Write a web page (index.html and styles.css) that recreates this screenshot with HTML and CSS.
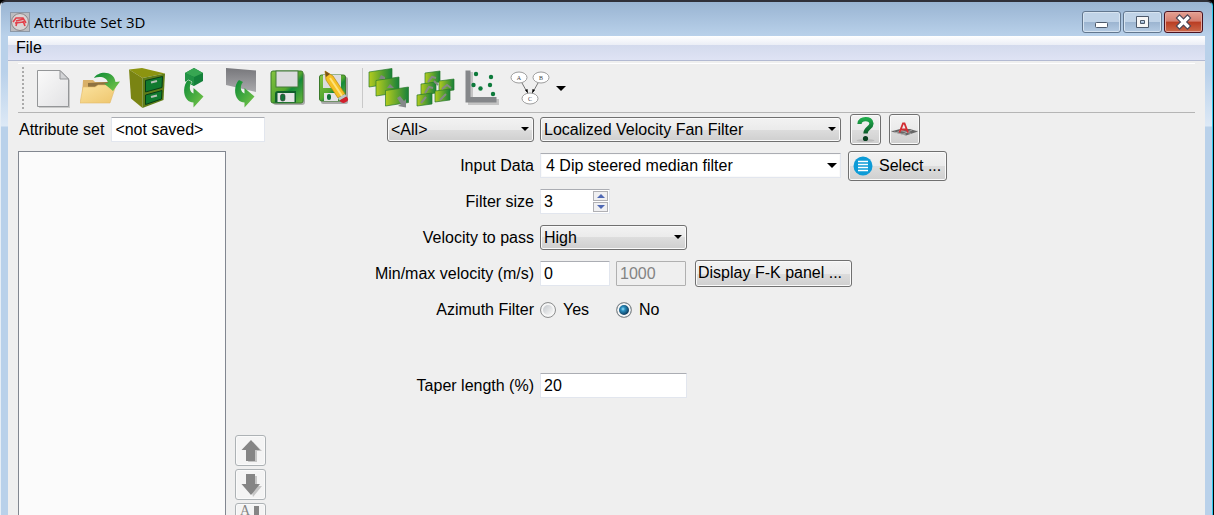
FILE: index.html
```html
<!DOCTYPE html>
<html lang="en">
<head>
<meta charset="utf-8">
<title>Attribute Set 3D</title>
<link rel="stylesheet" href="styles.css">
</head>
<body>
<svg class="defs" width="0" height="0" aria-hidden="true">
  <defs>
    <linearGradient id="green" x1="0" y1="0" x2="1" y2="1"><stop offset="0" stop-color="#0b8a35"/><stop offset="1" stop-color="#7cc84a"/></linearGradient>
    <linearGradient id="tile" x1="0" y1="0" x2="1" y2="0"><stop offset="0" stop-color="#b4cc1e"/><stop offset="1" stop-color="#17803a"/></linearGradient>
    <linearGradient id="paper" x1="0" y1="0" x2="1" y2="1"><stop offset="0" stop-color="#fafafa"/><stop offset="1" stop-color="#e2e2e4"/></linearGradient>
    <linearGradient id="folder" x1="0" y1="0" x2="1" y2="1"><stop offset="0" stop-color="#fbe3a0"/><stop offset="1" stop-color="#eec56c"/></linearGradient>
    <linearGradient id="screen" x1="0" y1="0" x2="0" y2="1"><stop offset="0" stop-color="#77777b"/><stop offset="1" stop-color="#aaaaad"/></linearGradient>
    <linearGradient id="disk" x1="0" y1="0" x2="1" y2="1"><stop offset="0" stop-color="#86c440"/><stop offset=".5" stop-color="#55a72f"/><stop offset=".6" stop-color="#148a3a"/><stop offset="1" stop-color="#6cb83c"/></linearGradient>
    <linearGradient id="help" x1="0" y1="0" x2="0" y2="1"><stop offset="0" stop-color="#1faa4b"/><stop offset="1" stop-color="#0b5a2a"/></linearGradient>
    <g id="tile-shape"><path d="M0 2 15 0V11L0 13Z" fill="url(#tile)" stroke="#2a7a2c" stroke-width=".7"/></g>
    <path id="hook" d="M14 12C9 17 9 27 13 31.500 15 33.800 17 34.500 19.500 34.500V39.500L29.500 28.500 19.500 20V25.500C15.500 24 14.500 18 18 14Z"/>
  </defs>
</svg>

<main class="window">
  <header class="titlebar">
    <svg class="app-icon" viewBox="0 0 20 20" aria-hidden="true">
      <rect x=".5" y=".5" width="19" height="19" fill="#bcbcc0" stroke="#8d98a6"/>
      <circle cx="10" cy="10" r="8.500" fill="#d9d4d4" stroke="#8a8588"/>
      <path d="M3 10 6 6h7l3 5M6 9l8-2M5 11l9-1M7 10 6 14M13 9l2 5" fill="none" stroke="#e3404a" stroke-width="1.600"/>
    </svg>
    <h1 class="title">Attribute Set 3D</h1>
    <div class="window-buttons">
      <button class="win-btn" type="button" aria-label="Minimize"><svg viewBox="0 0 37 20"><rect x="12.500" y="10.500" width="12" height="5" rx="1" fill="#fff" stroke="#4c596b"/></svg></button>
      <button class="win-btn" type="button" aria-label="Maximize"><svg viewBox="0 0 37 20"><path d="M12.500 4.500h12v11h-12ZM16.500 8.500v3h4v-3Z" fill="#f6f6f6" fill-rule="evenodd" stroke="#4c596b"/></svg></button>
      <button class="win-btn win-close" type="button" aria-label="Close"><svg viewBox="0 0 37 20"><path d="M14.500 6 22.500 14M22.500 6 14.500 14" fill="none" stroke="#4c4656" stroke-width="5.500" stroke-linecap="square"/><path d="M14.500 6 22.500 14M22.500 6 14.500 14" fill="none" stroke="#fff" stroke-width="3.200" stroke-linecap="square"/></svg></button>
    </div>
  </header>

  <div class="client">
    <nav class="menubar"><button class="menu" type="button">File</button></nav>

    <div class="toolbar" role="toolbar">
      <span class="grip"></span>
      <button class="tool" type="button" aria-label="New"><svg viewBox="0 0 41 41"><path d="M6 4H29L37 12V40H6Z" fill="#c9c9c9"/><path d="M4.500 2.500H27L35.500 11V38.500H4.500Z" fill="url(#paper)" stroke="#949698"/><path d="M27 2.500V11H35.500Z" fill="#d2d3d5" stroke="#949698"/></svg></button>
      <button class="tool" type="button" aria-label="Open"><svg viewBox="0 0 41 41"><path d="M3 12H13L15 14H28V24L2 28Z" fill="#d9b068"/><path d="M8 15 28 14V22H8Z" fill="#8f7240"/><path d="M0 35 3 19H15L18 17H36L30 35Z" fill="url(#folder)" stroke="#e3b968" stroke-width=".6"/><path d="M14 10C18 3 34 2 35.500 14L40 13.500 33 23 24 15.500 28 15C27 9 20 8 14 10Z" fill="url(#green)"/></svg></button>
      <button class="tool" type="button" aria-label="Default set"><svg viewBox="0 0 41 41"><path d="M2 1.500 15 0 38 5.500 15.500 10Z" fill="#8c9410"/><path d="M2 1.500 15.500 10V40L4 30.500Z" fill="#7a8413"/><path d="M15.500 10 38 5.500 36.500 32 15.500 40Z" fill="#5f7d18"/><path d="M18.500 12.500 35.500 8.500 35 19.500 18.500 24ZM18.500 27 35 22.500 34.500 31 18.500 36.500Z" fill="#107a2f" stroke="#063d18"/><path d="M24 14.500 30 13M24 29 30 27.500" stroke="#b5c2b5" stroke-width="2.200"/></svg></button>
      <button class="tool" type="button" aria-label="Import set"><svg viewBox="0 0 41 41"><path d="M20 0 29 5V13L20 18 11 13V5Z" fill="#14803a"/><path d="M20 0 29 5 20 9 11 5Z" fill="#37a652"/><path d="M20 9V18L11 13V5Z" fill="#229245"/><use href="#hook" fill="#efefef" stroke="#efefef"/><use href="#hook" fill="url(#green)"/></svg></button>
      <button class="tool" type="button" aria-label="Reconstruct set"><svg viewBox="0 0 41 41"><path d="M5 0 35 2.500V24L5 17Z" fill="url(#screen)"/><use href="#hook" x="4" fill="url(#green)"/></svg></button>
      <button class="tool" type="button" aria-label="Save"><svg viewBox="0 0 41 41"><rect x="5" y="5" width="32" height="32" rx="3" fill="#aaa"/><rect x="3" y="3" width="32" height="32" rx="2" fill="url(#disk)" stroke="#3b7a2a"/><rect x="8" y="3" width="22" height="16" fill="#dcdcde" stroke="#447a3a"/><path d="M7 34.500V26Q7 23 10 23H28V34.500Z" fill="#105f2c"/><rect x="9.500" y="25" width="17" height="9" fill="#e4e4e6"/><rect x="12.500" y="26" width="4.500" height="7" rx="2" fill="#147238" stroke="#333" stroke-width=".6"/></svg></button>
      <button class="tool" type="button" aria-label="Save as"><svg viewBox="0 0 41 41"><rect x="6" y="9" width="27" height="27" rx="2" fill="#aaa"/><rect x="4.500" y="7" width="26" height="26" rx="2" fill="url(#disk)" stroke="#3b7a2a"/><rect x="8" y="7" width="18" height="13" fill="#dcdcde"/><rect x="9" y="25" width="14" height="8" fill="#e4e4e6"/><rect x="12" y="26" width="4" height="6" rx="2" fill="#147238"/><path d="M10 3 18 8 30 26 23 30 11 12Z" fill="#f5c024" stroke="#b98510" stroke-width=".7"/><path d="M10 3 15 6 11 9Z" fill="#7a5218"/><path d="M15 10 27 28" stroke="#ffe27a" stroke-width="2"/><path d="M23 30 30 26 31.500 28.500 24.500 32.500Z" fill="#bfc4c8"/><path d="M24.500 32.500 31.500 28.500Q35 32 31 34 27 36.500 24.500 32.500Z" fill="#d21f2c"/></svg></button>
      <span class="separator"></span>
      <button class="tool" type="button" aria-label="Redisplay"><svg viewBox="0 0 41 41"><g fill="url(#tile)" stroke="#2a7a2c" stroke-width=".7"><path d="M1 4 24 .5V15.500L1 19Z"/><path d="M8 12.500 31 9V24.500L8 28Z"/><path d="M17.500 22.500 40.500 19V34.500L17.500 38Z"/></g><path d="M11 11 13 7 17 9 17 11ZM19 20 22 16 26 20Z" fill="#7f8583"/><path d="M29 30 32 28 36 33 38 31V39.500L30 38 33 36Z" fill="#85898a"/></svg></button>
      <button class="tool" type="button" aria-label="Evaluate"><svg viewBox="0 0 41 41"><use href="#tile-shape" x="10" y="3"/><use href="#tile-shape" x="6" y="14"/><use href="#tile-shape" x="24" y="11"/><use href="#tile-shape" x="2" y="25"/><use href="#tile-shape" x="20" y="21"/><path d="M13 14 17 9 21 10M10 25 14 19 18 20M27 21 32 17 36 20M6 35 11 29M25 32 31 26M19 13 23 17" fill="none" stroke="#858985" stroke-width="2"/></svg></button>
      <button class="tool" type="button" aria-label="Cross plot"><svg viewBox="0 0 41 41"><path d="M6 4H11V31H37V37H6Z" fill="#c4c4c4"/><path d="M3.500 2.500H8.500V29H34.500V34.500H3.500Z" fill="#85878a"/><g fill="#0d7a3b"><circle cx="14" cy="6" r="2.200"/><circle cx="29" cy="9" r="2.200"/><circle cx="11.500" cy="17" r="2.200"/><circle cx="18.500" cy="20.500" r="2.200"/><circle cx="28" cy="17" r="2.200"/><circle cx="31" cy="26" r="2.200"/></g></svg></button>
      <button class="tool" type="button" aria-label="Graph"><svg viewBox="0 0 41 41"><g fill="#fff" stroke="#929292" stroke-width=".9"><ellipse cx="10" cy="9.500" rx="8" ry="5.500"/><ellipse cx="32" cy="9.500" rx="8" ry="5.500"/><ellipse cx="21" cy="30.500" rx="8" ry="5.500"/></g><path d="M13 15 18 24M29 15 24 24" stroke="#555" stroke-width=".8"/><path d="M16 22 19 25.500 18.500 21ZM26 22 23 25.500 23.500 21Z"/><g class="node-text"><text x="10" y="11.500">A</text><text x="32" y="11.500">B</text><text x="21" y="32.500">C</text></g></svg></button>
      <button class="tool-more" type="button" aria-label="More"><span class="arrow arrow-large"></span></button>
    </div>

    <div class="content">
      <section class="set-pane">
        <div class="set-name"><label for="set">Attribute set</label><input class="field" id="set" type="text" value="&lt;not saved&gt;"></div>
        <div class="set-body">
          <div class="set-list" role="listbox" aria-label="Attributes"></div>
          <div class="set-actions">
            <button class="square faded" type="button" aria-label="Move up"><svg viewBox="0 0 29 29"><path d="M17 6 26 15H21V26H12Z" fill="#c6c6c6"/><path d="M15 4 24 14H19V25H10V14H5.500Z" fill="#858585"/></svg></button>
            <button class="square faded" type="button" aria-label="Move down"><svg viewBox="0 0 29 29"><path d="M12 6H21V16H26L17 27Z" fill="#c6c6c6"/><path d="M10 4H19V14H24L15 25 5.500 14H10Z" fill="#858585"/></svg></button>
            <button class="square faded" type="button" aria-label="Sort"><svg viewBox="0 0 29 29"><text class="sort-text" x="4" y="11">A</text><path d="M18 2H23V17H27L20.500 26 14 17H18Z" fill="#858585"/></svg></button>
          </div>
        </div>
      </section>

      <form class="params">
        <span class="select key-select"><select aria-label="Group"><option>&lt;All&gt;</option></select></span>
        <div class="controls">
          <span class="select wide"><select aria-label="Attribute"><option>Localized Velocity Fan Filter</option></select></span>
          <div class="helpers">
            <button class="square" type="button" aria-label="Help"><svg viewBox="0 0 29 29"><ellipse cx="14.500" cy="25.500" rx="9" ry="1.500" fill="#bbb"/><path d="M8.500 9C8.500 2.500 20.500 2.500 20.500 8.500 20.500 13 14.500 13 14.500 18.500" fill="none" stroke="url(#help)" stroke-width="4.300"/><circle cx="14.500" cy="23.500" r="2.600" fill="#093f20"/></svg></button>
            <button class="square" type="button" aria-label="Evaluate attribute"><svg viewBox="0 0 29 29"><path d="M1 16.500 10 14H20L28 16.500 16 20.500Z" fill="#666"/><path d="M4 17 16 20M9 15 21 18.500M5 18 16 14M11 20 22 15" stroke="#bbb" stroke-width=".7"/><path d="M9.500 17.500 13 8.500H14.500L18 17.500M11 14.500H16.500" fill="none" stroke="#d32d32" stroke-width="1.800"/></svg></button>
          </div>
        </div>

        <label for="input-data">Input Data</label>
        <div class="controls">
          <span class="select wide editable"><select id="input-data"><option>4 Dip steered median filter</option></select></span>
          <button class="button icon-button" type="button"><svg viewBox="0 0 20 20" aria-hidden="true"><circle cx="10" cy="10" r="9.500" fill="#0d9bd7"/><path d="M5 5.500H15M5 8.500H15M5 11.500H15M5 14.500H15" stroke="#fff" stroke-width="1.700"/></svg>Select ...</button>
        </div>

        <label for="size">Filter size</label>
        <div class="controls"><span class="spin"><input class="field short" id="size" type="number" value="3"><span class="steps"><button type="button" aria-label="Increase"><i class="up"></i></button><button type="button" aria-label="Decrease"><i class="down"></i></button></span></span></div>

        <label for="pass">Velocity to pass</label>
        <div class="controls"><span class="select medium"><select id="pass"><option>High</option></select></span></div>

        <label for="min">Min/max velocity (m/s)</label>
        <div class="controls"><span class="pair"><input class="field short" id="min" type="text" value="0"><input class="field short" type="text" value="1000" aria-label="Maximum velocity" disabled></span><button class="button fk-button" type="button">Display F-K panel ...</button></div>

        <span class="key">Azimuth Filter</span>
        <div class="controls pair"><label class="choice"><input type="radio" name="azimuth">Yes</label><label class="choice"><input type="radio" name="azimuth" checked>No</label></div>

        <label class="apart" for="taper">Taper length (%)</label>
        <div class="controls apart"><input class="field medium" id="taper" type="text" value="20"></div>
      </form>
    </div>
  </div>
</main>
</body>
</html>
```
FILE: styles.css
```css
* { box-sizing: border-box; }
body {
  margin: 0;
  background: #000;
  color: #000;
  font: 16px/20px "Liberation Sans", Arial, sans-serif;
}
button, input, select { font: inherit; color: inherit; margin: 0; }
button { padding: 0; border: 0; background: none; }
svg { display: block; }
.defs { position: absolute; }

.window {
  display: flex;
  flex-direction: column;
  height: 100vh;
  margin-right: 1px;
  padding: 0 7px;
  overflow: hidden;
  border: solid;
  border-width: 2px 1px 0;
  border-color: #2f3039 #2fc8ec #000 #e6eef6;
  border-radius: 6px 6px 0 0;
  background: linear-gradient(#99b4d2, #b9d1ea 34px, #b9d1ea 70px, #dde9f6 124px, #b9d1ea 125px);
}

.titlebar { display: flex; flex: none; height: 34px; padding: 6px 2px 0; align-items: center; }
.app-icon { width: 20px; height: 20px; }
.title { flex: 1; margin: 0 4px; font: 15px/20px "Open Sans", "Noto Sans", sans-serif; }
.window-buttons { display: flex; gap: 2px; align-self: flex-start; margin-top: 3px; }
.win-btn {
  width: 39px;
  height: 22px;
  border: 1px solid #62778f;
  border-radius: 3px;
  box-shadow: inset 0 0 0 1px #d7e4f1;
  background: linear-gradient(#c0d3e7 48%, #9bb4d0 50%, #b4cbe3);
}
.win-close { border-color: #4a1220; box-shadow: inset 0 0 0 1px #e5a79c; background: linear-gradient(#e5a092, #d57f70 46%, #b93c22 50%, #cc6a4a); }

.client { display: flex; flex: 1; flex-direction: column; min-height: 0; background: #efefef; }
.menubar { flex: none; height: 25px; padding: 0 8px; border-bottom: 1px solid #b3bad2; background: linear-gradient(#fff, #ebeef6 9px, #d3daed 9px, #dfe3f4); }
.menu { height: 24px; }

.toolbar {
  display: flex;
  flex: none;
  align-items: center;
  height: 50px;
  margin: 2px 10px 0;
  padding-left: 3px;
  border-top: 1px solid #fff;
  border-bottom: 1px solid #b5b5b5;
}
.grip { width: 2px; height: 42px; margin: 0 6px 0 1px; background: repeating-linear-gradient(#aaa 0 2px, #efefef 2px 4px); }
.tool { display: grid; flex: none; width: 47px; height: 48px; place-items: center; }
.tool svg { width: 41px; height: 41px; }
.separator { width: 1px; height: 40px; margin: 0 2px 0 3px; background: #c9c9c9; }
.node-text { font: 6px "Liberation Serif", serif; text-anchor: middle; fill: #444; }
.tool-more { display: grid; width: 16px; height: 40px; place-items: center; }
.arrow, .select::after { border: solid transparent; border-width: 4px 4px 0; border-top-color: #000; }
.arrow-large, .editable.select::after { border-width: 5px 5px 0; }

.content { display: flex; flex: 1; gap: 106px; min-height: 0; padding: 4px 10px 0; }
.set-pane { display: flex; flex: none; flex-direction: column; width: 248px; gap: 9px; }
.set-name { display: flex; align-items: center; gap: 7px; padding: 0 1px; }
.set-name label { flex: none; }
.set-name .field { flex: 1; min-width: 0; }
.set-body { display: flex; flex: 1; gap: 9px; min-height: 0; }
.set-list { flex: 1; border: 1px solid #828790; border-bottom: 0; background: #fbfbfb; }
.set-actions { display: flex; flex-direction: column; gap: 3px; padding-top: 284px; overflow: hidden; }

.field {
  height: 25px;
  padding: 0 3px;
  border: 1px solid #e2e6ee;
  border-top-color: #abadb3;
  border-radius: 1px;
  background: #fff;
}
.field:disabled { border: 1px solid #b0b0b0; background: #efefef; color: #838383; }
.short { width: 70px; }
.medium { width: 147px; }
.wide { width: 301px; }

.square {
  flex: none;
  width: 31px;
  height: 31px;
  border: 1px solid #707070;
  border-radius: 3px;
  box-shadow: inset 0 0 0 1px #fafafa;
  background: linear-gradient(#f2f2f2, #ebebeb 50%, #dddddd 50%, #cfcfcf);
}
.faded { border-color: #adb2b5; background: #f4f4f4; }
.sort-text { font: 14px "Liberation Serif", serif; fill: #858585; }

.params { display: grid; flex: 1; grid-template-columns: 162px 1fr; grid-auto-rows: 25px; align-content: start; gap: 11px 6px; align-items: center; }
.params > label, .key { text-align: right; white-space: nowrap; }
.key-select { width: 147px; justify-self: end; }
.controls { display: flex; align-items: center; gap: 7px; }
.helpers { display: flex; gap: 8px; padding-left: 2px; }
.pair { display: flex; gap: 6px; }
.apart { margin-top: 40px; }
.params > .apart { align-self: start; }
label.apart { line-height: 25px; }

.select { position: relative; display: block; }
.select select {
  display: block;
  width: 100%;
  height: 25px;
  padding: 0 16px 0 3px;
  appearance: none;
  border: 1px solid #707070;
  border-radius: 3px;
  box-shadow: inset 0 0 0 1px #fafafa;
  background: linear-gradient(#f2f2f2, #ebebeb 50%, #dddddd 50%, #cfcfcf);
}
.select::after { content: ""; position: absolute; top: 10px; right: 5px; pointer-events: none; }
.editable.select select { padding-left: 5px; border-color: #abadb3 #e2e6ee #e2e6ee; border-radius: 1px; background: #fff; }
.editable.select::after { right: 4px; }

.button {
  height: 27px;
  padding: 0 3px 2px 2px;
  border: 1px solid #707070;
  border-radius: 3px;
  box-shadow: inset 0 0 0 1px #fafafa;
  background: linear-gradient(#f2f2f2, #ebebeb 50%, #dddddd 50%, #cfcfcf);
  text-align: left;
  white-space: nowrap;
}
.icon-button { display: flex; min-width: 99px; height: 30px; align-items: center; gap: 6px; padding: 0 3px 0 4px; }
.icon-button svg { width: 20px; height: 20px; }
.fk-button { min-width: 157px; margin-left: 2px; }

.spin { position: relative; }
.spin .field { appearance: textfield; display: block; }
.steps { position: absolute; top: 2px; right: 2px; display: grid; width: 15px; gap: 1px; }
.steps button { display: grid; height: 10px; place-items: center; border: 1px solid #b0b0b4; background: #f0f0f2; }
.up, .down { border: solid transparent; }
.up { border-width: 0 4px 4px; border-bottom-color: #4f68b4; }
.down { border-width: 4px 4px 0; border-top-color: #4f68b4; }

.choice { display: flex; width: 70px; align-items: center; gap: 7px; }
.choice input {
  width: 16px;
  height: 16px;
  appearance: none;
  border: 1px solid #8e8f8f;
  border-radius: 50%;
  box-shadow: inset 0 0 0 2px #f6f6f6;
  background: linear-gradient(135deg, #b9bec4, #f2f2f2 75%);
}
.choice input:checked { background: radial-gradient(circle at 6px 6px, #9be2fa 0, #2a8fc0 2px, #0e3c5e 6px); box-shadow: inset 0 0 0 2px #f6f6f6; }
```
